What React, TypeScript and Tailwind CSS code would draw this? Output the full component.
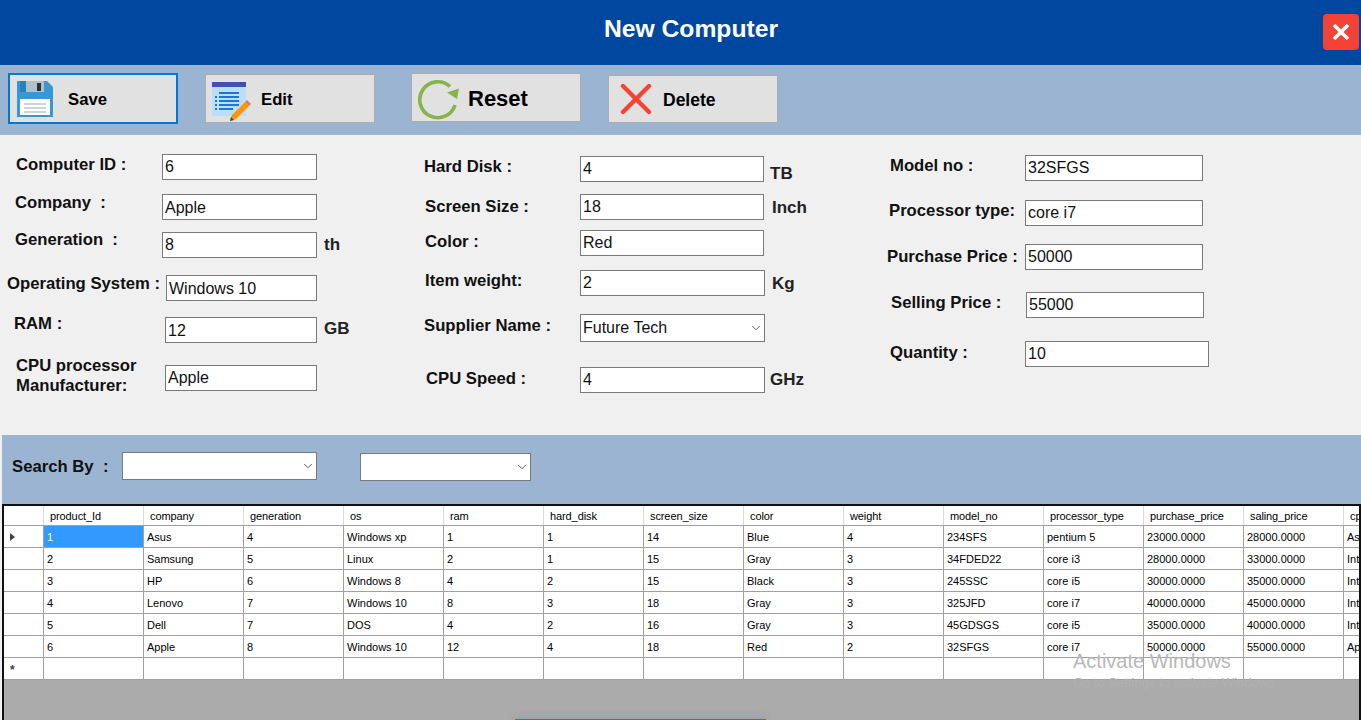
import { ChevronDown } from "lucide-react";

const COLUMNS = [
  "product_Id", "company", "generation", "os", "ram", "hard_disk", "screen_size", "color",
  "weight", "model_no", "processor_type", "purchase_price", "saling_price", "cpu_manufacturer",
];

const ROWS = [
  ["1", "Asus", "4", "Windows xp", "1", "1", "14", "Blue", "4", "234SFS", "pentium 5", "23000.0000", "28000.0000", "Asus"],
  ["2", "Samsung", "5", "Linux", "2", "1", "15", "Gray", "3", "34FDED22", "core i3", "28000.0000", "33000.0000", "Intel"],
  ["3", "HP", "6", "Windows 8", "4", "2", "15", "Black", "3", "245SSC", "core i5", "30000.0000", "35000.0000", "Intel"],
  ["4", "Lenovo", "7", "Windows 10", "8", "3", "18", "Gray", "3", "325JFD", "core i7", "40000.0000", "45000.0000", "Intel"],
  ["5", "Dell", "7", "DOS", "4", "2", "16", "Gray", "3", "45GDSGS", "core i5", "35000.0000", "40000.0000", "Intel"],
  ["6", "Apple", "8", "Windows 10", "12", "4", "18", "Red", "2", "32SFGS", "core i7", "50000.0000", "55000.0000", "Apple"],
];

function SaveIcon() {
  return (
    <svg width="36" height="36" viewBox="0 0 36 36" className="shrink-0">
      <path d="M0 0H30L36 6V36H0Z" fill="#3b97d3" />
      <rect x="3" y="0" width="7" height="11" fill="#2980ba" />
      <rect x="9" y="0" width="18" height="11" fill="#b0c1c9" />
      <rect x="20" y="2" width="4" height="8" fill="#25333c" />
      <rect x="3" y="18" width="30" height="16" fill="#fff" />
      <rect x="7" y="22" width="22" height="2" fill="#cbd5da" />
      <rect x="7" y="26" width="22" height="2" fill="#cbd5da" />
      <rect x="7" y="30" width="22" height="2" fill="#cbd5da" />
    </svg>
  );
}

function EditIcon() {
  return (
    <svg width="40" height="40" viewBox="0 0 40 40" className="shrink-0">
      <rect x="0" y="0" width="34" height="34" fill="#bbdefb" />
      <rect x="0" y="0" width="34" height="5" fill="#3f51b5" />
      <g fill="#1976d2">
        <rect x="7" y="10" width="20" height="2" />
        <rect x="7" y="14" width="20" height="2" />
        <rect x="7" y="18" width="20" height="2" />
        <rect x="7" y="22" width="20" height="2" />
        <rect x="7" y="26" width="14" height="2" />
        <rect x="3" y="14" width="2" height="2" />
        <rect x="3" y="18" width="2" height="2" />
        <rect x="3" y="22" width="2" height="2" />
        <rect x="3" y="26" width="2" height="2" />
      </g>
      <path d="M20 33L33 20L37 24L24 37L18 39Z" fill="#ff9800" />
      <path d="M33 20L35 18L39 22L37 24Z" fill="#e57373" />
      <path d="M18 39L19 35L22 38Z" fill="#37474f" />
    </svg>
  );
}

function ResetIcon() {
  return (
    <svg width="42" height="44" viewBox="0 0 42 44" className="shrink-0">
      <path d="M32 10.5A18 18 0 1 0 37 29" fill="none" stroke="#85b548" strokeWidth="3.6" />
      <path d="M41 12.5L39 23L29 16.5Z" fill="#85b548" />
    </svg>
  );
}

function DeleteIcon() {
  return (
    <svg width="32" height="32" viewBox="0 0 32 32" className="shrink-0">
      <path d="M3 3L29 29M29 3L3 29" stroke="#f44336" strokeWidth="4.4" strokeLinecap="round" />
    </svg>
  );
}

function ToolButton({ cls, icon, label, labelCls }: { cls: string; icon: React.ReactNode; label: string; labelCls: string }) {
  return (
    <button className={`flex w-[170px] shrink-0 items-center bg-[#e1e1e1] text-black ${cls}`}>
      {icon}
      <span className={labelCls}>{label}</span>
    </button>
  );
}

function Field({
  row, label, labelCls, boxCls, value, unit, unitCls, select,
}: {
  row: string; label: React.ReactNode; labelCls: string; boxCls: string; value: string;
  unit?: string; unitCls?: string; select?: boolean;
}) {
  return (
    <div className={`flex items-start ${row}`}>
      <div className={`shrink-0 pt-[1px] text-[16.7px] leading-[20px] font-bold whitespace-nowrap text-[#111] ${labelCls}`}>{label}</div>
      <div className={`flex shrink-0 items-center justify-between border border-[#7a7a7a] bg-white pl-[2px] text-[16px] text-[#111] ${boxCls}`}>
        <span>{value}</span>
        {select && <ChevronDown size={14} strokeWidth={1.6} className="mr-[1px] text-[#555]" />}
      </div>
      {unit && <div className={`text-[17px] leading-[20px] font-bold text-[#222] ${unitCls}`}>{unit}</div>}
    </div>
  );
}

function EmptySelect({ cls }: { cls: string }) {
  return (
    <div className={`flex shrink-0 items-center justify-end border border-[#7a7a7a] bg-white pr-[1px] ${cls}`}>
      <ChevronDown size={14} strokeWidth={1.6} className="text-[#555]" />
    </div>
  );
}

function DataRow({ cells, selected, head }: { cells: string[]; selected?: boolean; head: React.ReactNode }) {
  return (
    <div className="flex h-[22px] border-b border-[#a0a0a0]">
      <div className="flex w-[40px] shrink-0 items-center border-r border-[#a0a0a0] pl-[6px] text-[#444]">{head}</div>
      {cells.map((c, i) => (
        <div
          key={i}
          className={`w-[100px] shrink-0 truncate border-r border-[#a0a0a0] pl-[3px] leading-[23px] ${selected && i === 0 ? "bg-[#3399ff] text-white" : ""}`}
        >
          {c}
        </div>
      ))}
    </div>
  );
}

export default function App() {
  return (
    <div className="relative h-[720px] w-[1361px] overflow-hidden bg-[#f0f0f0] font-['Liberation_Sans',sans-serif]">
      <header className="relative flex h-[65px] items-center justify-center bg-[#0047a0] pb-[7px] pl-[21px] text-[24.7px] font-bold text-white">
        New Computer
        <div className="absolute top-[14px] right-[2px] flex h-[36px] w-[36px] items-center justify-center rounded-[4px] bg-[#f44336]">
          <svg width="20" height="20" viewBox="0 0 20 20">
            <path d="M3 3L17 17M17 3L3 17" stroke="#fff" strokeWidth="3.6" />
          </svg>
        </div>
      </header>

      <div className="flex h-[70px] items-start bg-[#9ab4d2] pt-[8px] pl-[8px]">
        <ToolButton cls="h-[51px] border-2 border-[#0078d7] pl-[7px]" icon={<SaveIcon />} label="Save" labelCls="ml-[15px] mt-[2px] text-[16.7px] font-bold" />
        <ToolButton cls="ml-[27px] mt-[1px] h-[49px] border border-[#adadad] pt-[6px] pl-[6px]" icon={<EditIcon />} label="Edit" labelCls="ml-[9px] mb-[4px] text-[16.7px] font-bold" />
        <ToolButton cls="ml-[36px] h-[49px] border border-[#adadad] pl-[6px]" icon={<ResetIcon />} label="Reset" labelCls="ml-[8px] mt-[2px] text-[22px] font-bold" />
        <ToolButton cls="ml-[27px] mt-[2px] h-[48px] border border-[#adadad] pl-[11px]" icon={<DeleteIcon />} label="Delete" labelCls="ml-[11px] mt-[3px] text-[17.5px] font-bold" />
      </div>

      <div className="flex h-[300px] bg-[#f0f0f0]">
        <div className="w-[424px] shrink-0 pt-[19px]">
          <Field row="h-[40px]" label="Computer ID :" labelCls="w-[162px] pl-[16px]" boxCls="h-[26px] w-[155px]" value="6" />
          <Field row="h-[38px]" label={<span>Company&nbsp; :</span>} labelCls="w-[162px] -mt-[2px] pl-[15px]" boxCls="h-[26px] w-[155px] pt-[1px]" value="Apple" />
          <Field row="h-[43px]" label={<span>Generation&nbsp; :</span>} labelCls="w-[162px] -mt-[3px] pl-[15px]" boxCls="h-[26px] w-[155px]" value="8" unit="th" unitCls="ml-[7px] mt-[3px]" />
          <Field row="h-[42px]" label="Operating System :" labelCls="w-[159px] mr-[7px] -mt-[2px] pl-[7px]" boxCls="h-[26px] w-[151px] pt-[1px]" value="Windows 10" />
          <Field row="h-[48px]" label="RAM :" labelCls="w-[165px] -mt-[4px] pl-[14px]" boxCls="h-[26px] w-[152px] pt-[1px]" value="12" unit="GB" unitCls="ml-[7px] mt-[2px]" />
          <Field row="h-[26px]" label={<span>CPU processor<br />Manufacturer:</span>} labelCls="w-[165px] -mt-[10px] pl-[16px]" boxCls="h-[26px] w-[152px]" value="Apple" />
        </div>

        <div className="w-[463px] shrink-0 pt-[21px]">
          <Field row="h-[38px]" label="Hard Disk :" labelCls="w-[156px]" boxCls="h-[26px] w-[184px]" value="4" unit="TB" unitCls="ml-[6px] mt-[8px]" />
          <Field row="h-[36px]" label="Screen Size :" labelCls="w-[156px] mt-[2px] pl-[1px]" boxCls="h-[26px] w-[184px]" value="18" unit="Inch" unitCls="ml-[8px] mt-[4px]" />
          <Field row="h-[40px]" label="Color :" labelCls="w-[156px] mt-[1px] pl-[1px]" boxCls="h-[26px] w-[184px]" value="Red" />
          <Field row="h-[44px]" label="Item weight:" labelCls="w-[156px] pl-[1px]" boxCls="h-[26px] w-[185px]" value="2" unit="Kg" unitCls="ml-[7px] mt-[4px]" />
          <Field row="h-[53px]" label="Supplier Name :" labelCls="w-[156px] mt-[1px]" boxCls="h-[28px] w-[185px]" value="Future Tech" select />
          <Field row="h-[26px]" label="CPU Speed :" labelCls="w-[156px] mt-[1px] pl-[2px]" boxCls="h-[26px] w-[185px]" value="4" unit="GHz" unitCls="ml-[5px] mt-[3px]" />
        </div>

        <div className="flex-1 pt-[20px]">
          <Field row="h-[45px]" label="Model no :" labelCls="w-[138px] pl-[3px]" boxCls="h-[26px] w-[178px]" value="32SFGS" />
          <Field row="h-[44px]" label="Processor type:" labelCls="w-[138px] pl-[2px]" boxCls="h-[26px] w-[178px]" value="core i7" />
          <Field row="h-[48px]" label="Purchase Price :" labelCls="w-[138px] mt-[2px]" boxCls="h-[26px] w-[178px]" value="50000" />
          <Field row="h-[49px]" label="Selling Price :" labelCls="w-[139px] pl-[4px]" boxCls="h-[26px] w-[178px]" value="55000" />
          <Field row="h-[26px]" label="Quantity :" labelCls="w-[138px] mt-[1px] pl-[3px]" boxCls="h-[26px] w-[184px]" value="10" />
        </div>
      </div>

      <div className="ml-[2px] flex h-[69px] items-start bg-[#9ab4d2] pt-[17px]">
        <div className="ml-[10px] w-[110px] shrink-0 pt-[1px] text-[16.7px] leading-[28px] font-bold whitespace-nowrap text-[#111]">Search By&nbsp; :</div>
        <EmptySelect cls="h-[28px] w-[195px]" />
        <EmptySelect cls="ml-[43px] mt-[1px] h-[28px] w-[171px]" />
      </div>

      <div className="ml-[2px] h-[216px] border-x-2 border-t-2 border-[#111] bg-[#ababab]">
        <div className="h-[174px] overflow-hidden bg-white text-[11px] text-black">
          <div className="flex h-[19px]">
            <div className="w-[40px] shrink-0 border-r border-[#dcdcdc]" />
            {COLUMNS.map((c) => (
              <div key={c} className="w-[100px] shrink-0 border-r border-[#dcdcdc] pl-[6px] leading-[20px] tracking-[-0.1px] whitespace-nowrap">
                {c}
              </div>
            ))}
          </div>
          <div className="border-t border-[#a0a0a0]">
            {ROWS.map((r, i) => (
              <DataRow
                key={r[0]}
                cells={r}
                selected={i === 0}
                head={i === 0 ? <span className="h-0 w-0 border-y-[4px] border-l-[5px] border-y-transparent border-l-[#444]" /> : null}
              />
            ))}
            <DataRow cells={COLUMNS.map(() => "")} head={<span className="mt-[3px] text-[12px] font-bold">*</span>} />
          </div>
        </div>
      </div>

      <div className="pointer-events-none absolute top-[649px] left-[1073px] text-[20px] leading-[24px] text-[#b8b8b8]">Activate Windows</div>
      <div className="pointer-events-none absolute top-[675px] left-[1073px] text-[13px] leading-[16px] whitespace-nowrap text-[#b0b0b0]">Go to Settings to activate Windows.</div>
      <div className="absolute bottom-0 left-[515px] h-[1px] w-[251px] bg-[#2b7cc4] shadow-[0_0_8px_rgba(0,0,0,0.45)]" />
    </div>
  );
}
